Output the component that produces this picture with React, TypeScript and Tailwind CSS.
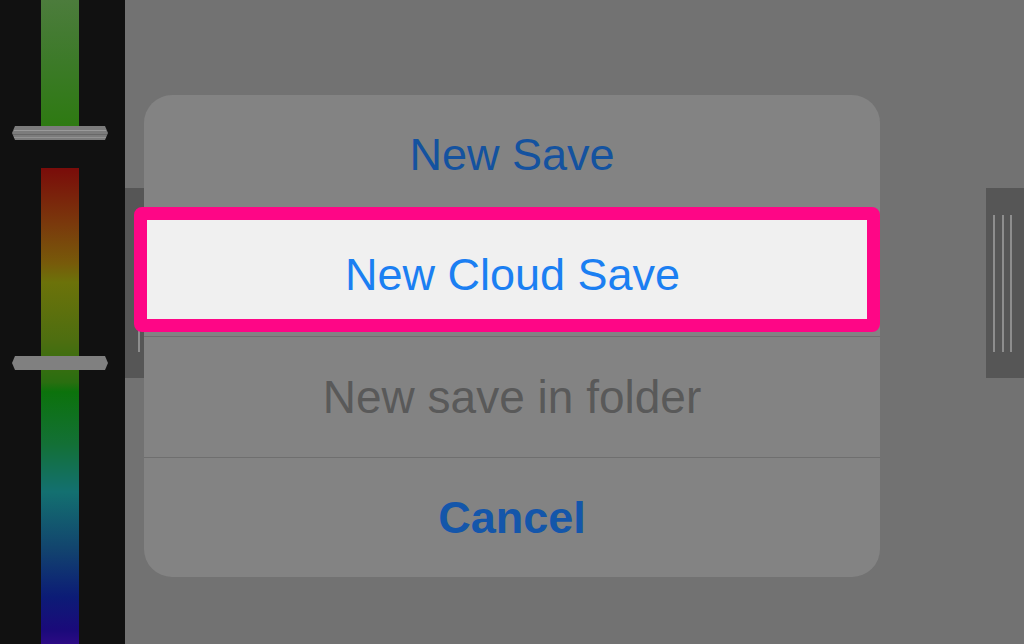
import React from "react";

function Handle({ striped }: { striped?: boolean }) {
  return (
    <svg width="96" height="14" viewBox="0 0 96 14" className="block">
      <polygon points="3,0 93,0 96,7 93,14 3,14 0,7" fill={striped ? "#7c7c7c" : "#808080"} />
      {striped && (
        <>
          <line x1="2" y1="4.5" x2="94" y2="4.5" stroke="#9a9a9a" strokeWidth="1" />
          <line x1="1" y1="8.5" x2="95" y2="8.5" stroke="#686868" strokeWidth="1" />
          <line x1="2" y1="11.5" x2="94" y2="11.5" stroke="#929292" strokeWidth="1" />
        </>
      )}
    </svg>
  );
}

function SidePanel({ lines }: { lines: number[] }) {
  return (
    <div className="relative h-[190px] w-full bg-[#565656]">
      <div className="flex h-full pt-[27px] pb-[26px]">
        {lines.map((x, i) => (
          <div
            key={i}
            className="h-full w-[2px] bg-[#8e8e8e]"
            style={{ marginLeft: i === 0 ? x : x - lines[i - 1] - 2 }}
          />
        ))}
      </div>
    </div>
  );
}

export default function App() {
  const font = { fontFamily: '"Liberation Sans", Arial, sans-serif' };
  return (
    <div className="relative flex h-[644px] w-[1024px] overflow-hidden bg-[#727272]" style={font}>
      {/* Left meter strip */}
      <div className="relative h-full w-[125px] shrink-0 bg-[#111111]">
        <div className="ml-[41px] flex h-full w-[38px] flex-col">
          <div className="h-[126px] w-full bg-[linear-gradient(to_bottom,#4c7c3c_0%,#3c7a28_50%,#2e7a12_100%)]" />
          <div className="mt-[42px] w-full flex-1 bg-[linear-gradient(to_bottom,#7a0c0a_0%,#7a3a0c_12%,#775a0a_20%,#6c720a_24%,#4e6e10_36%,#2a6e10_45%,#0c720c_47%,#137036_58%,#137070_68%,#12446e_80%,#0c1c76_90%,#1a0a7a_97%,#2c0a84_100%)]" />
        </div>
        <div className="absolute left-[12px] top-[126px]">
          <Handle striped />
        </div>
        <div className="absolute left-[12px] top-[356px]">
          <Handle />
        </div>
      </div>

      {/* Background content */}
      <div className="flex flex-1 items-start justify-between pt-[188px]">
        <div className="w-[19px]">
          <SidePanel lines={[13]} />
        </div>
        <div className="w-[38px]">
          <SidePanel lines={[7, 16, 24]} />
        </div>
      </div>

      {/* Dialog overlay */}
      <div className="absolute left-[144px] top-[95px] flex h-[482px] w-[736px] flex-col overflow-hidden rounded-[28px] bg-[#838383]">
        <div className="flex h-[120px] items-center justify-center text-[45px] text-[#14529f]">New Save</div>
        <div className="h-px bg-[#6f6f6f]" />
        <div className="h-[120px]" />
        <div className="h-px bg-[#6f6f6f]" />
        <div className="flex h-[120px] items-center justify-center text-[46px] text-[#595959]">New save in folder</div>
        <div className="h-px bg-[#6f6f6f]" />
        <div className="flex flex-1 items-center justify-center text-[45px] font-bold text-[#1456aa]">Cancel</div>
      </div>

      {/* Highlight annotation around "New Cloud Save" row */}
      <div className="absolute left-[134px] top-[207px] h-[125px] w-[746px] rounded-[8px] border-[13px] border-[#fe0686] bg-[#f0f0f0]">
        <div className="flex h-full items-center justify-center pl-[11px] pt-[11px] text-[45px] text-[#1b7ff2]">New Cloud Save</div>
      </div>
    </div>
  );
}
